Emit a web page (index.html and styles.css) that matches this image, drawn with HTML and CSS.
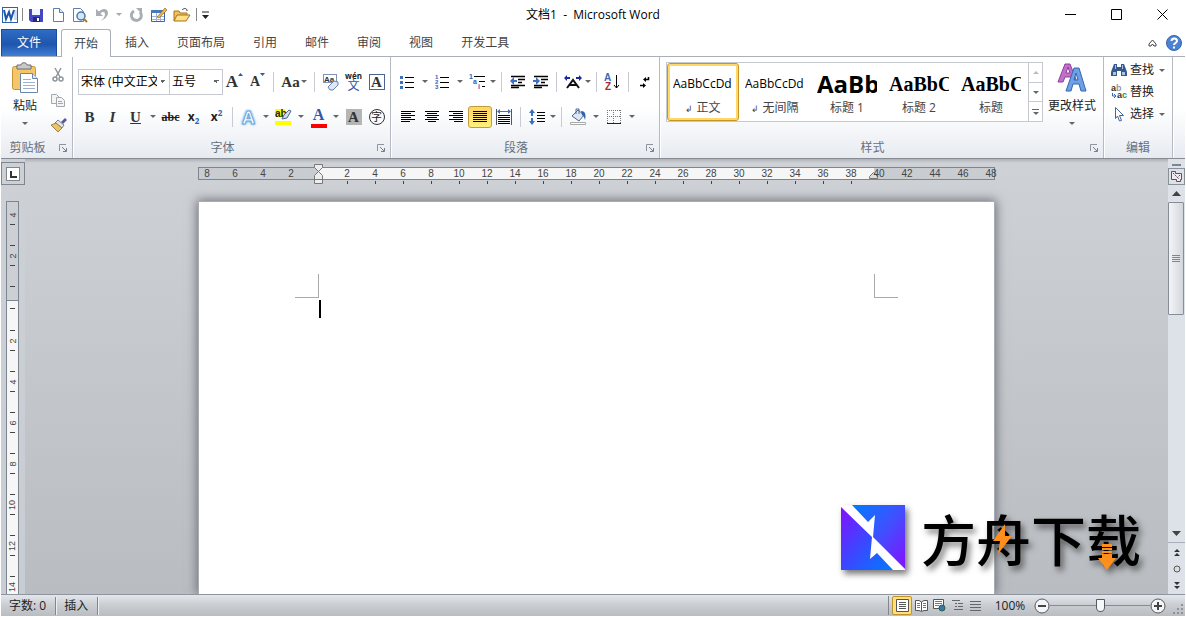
FILE: index.html
```html
<!DOCTYPE html>
<html lang="zh-CN">
  <head>
    <meta charset="utf-8" />
    <title>文档1 - Microsoft Word</title>
    <link rel="stylesheet" href="styles.css">
  </head>
  <body>
    <header class="titlebar">
      <div class="quick">
        <svg class="app" width="18" height="18" viewBox="0 0 18 18"><rect x="1.500" y="1.500" width="15" height="15" fill="#fff" stroke="#2b62ad"/><path d="M13 4h3v10h-3z" fill="#cfe0f5"/><path d="M3 4l2 9 3-7 2 7 3-9" fill="none" stroke="#1d56a8" stroke-width="2"/></svg>
        <i class="bar"></i>
        <button aria-label="保存"><svg width="16" height="16"><path d="M1 2h14v13H3l-2-2z" fill="#4546c4"/><path d="M4 2h8v6H4z" fill="#f0f4ff"/><path d="M5 10h7v5H5z" fill="#26267e"/><path d="M9 11h2v3H9z" fill="#fff"/></svg></button>
        <button aria-label="新建"><svg width="16" height="16"><path d="M3.500 1.500h6l4 4v9h-10z" fill="#fff" stroke="#5f7fa8"/><path d="M9.500 1.500v4h4" fill="#dbe6f3" stroke="#5f7fa8"/></svg></button>
        <button aria-label="打印预览"><svg width="16" height="16"><path d="M1.500 1.500h7l3 3v10h-10z" fill="#fff" stroke="#5f7fa8"/><circle cx="9" cy="9" r="4" fill="#cfe8fa" stroke="#4b76aa" stroke-width="1.500"/><path d="M12 12l3 3" stroke="#a9782c" stroke-width="2"/></svg></button>
        <button aria-label="撤消"><svg width="14" height="16"><path d="M1 2v7h7L5.500 6.500C8 4 10 5 10 7c0 3-2 5-4 7 4-2 7-5 7-8 0-5-6-5-9-1.500z" fill="#a9adb4"/></svg></button>
        <button class="drop" aria-label="撤消选项"><i class="tri light"></i></button>
        <button aria-label="恢复"><svg width="16" height="16"><path d="M6 4a5 5 0 1 0 6 1" fill="none" stroke="#a9adb4" stroke-width="3"/><path d="M8 1h6v6z" fill="#a9adb4"/></svg></button>
        <button class="wide" aria-label="绘制表格"><svg width="18" height="16"><path d="M1.500 3.500h13v11h-13z" fill="#fff" stroke="#3d65a5"/><path d="M1 3h14v3H1z" fill="#4a78bd"/><path d="M2 9.500h12M2 12.500h12M6.500 6v8M10.500 6v8" stroke="#9bb4d8"/><path d="M7 10l8-9 2 2-8 8z" fill="#f0b64a" stroke="#8a5a1e" stroke-width=".6"/></svg></button>
        <button class="wide" aria-label="打开"><svg width="18" height="16"><path d="M1 14V4h5l1 2h7v3" fill="#f2c25a" stroke="#a4731d"/><path d="M1 14l3-6h13l-4 6z" fill="#ffdf87" stroke="#a4731d"/><path d="M9 3c2-2 4-2 5 0v1" fill="none" stroke="#333"/></svg></button>
        <i class="bar"></i>
        <button class="drop" aria-label="自定义快速访问工具栏"><svg width="7" height="8"><path d="M0 1h7" stroke="#222"/><path d="M0 4h7L3.500 8z" fill="#222"/></svg></button>
      </div>
      <h1>文档1&nbsp; -&nbsp; Microsoft Word</h1>
      <div class="window-buttons">
        <button aria-label="最小化"><svg width="11" height="11"><path d="M0 5.500h11" stroke="#000"/></svg></button>
        <button aria-label="最大化"><svg width="11" height="11"><path d="M.5.500h10v10H.5z" fill="none" stroke="#000"/></svg></button>
        <button aria-label="关闭"><svg width="11" height="11"><path d="M.5.500l10 10M10.500.500l-10 10" stroke="#000"/></svg></button>
      </div>
    </header>

    <nav class="tabs">
      <button class="file">文件</button>
      <button class="active">开始</button>
      <button>插入</button>
      <button>页面布局</button>
      <button>引用</button>
      <button>邮件</button>
      <button>审阅</button>
      <button>视图</button>
      <button>开发工具</button>
      <div class="tabs-end">
        <button aria-label="功能区最小化"><svg width="9" height="8"><path d="M1 5l3.500-4L8 5v2H6L4.500 5 3 7H1z" fill="#fff" stroke="#444"/></svg></button>
        <button aria-label="帮助"><svg width="16" height="16"><circle cx="8" cy="8" r="7.500" fill="#4b82d3" stroke="#3465ad"/><path d="M5.500 6c0-3.500 5.500-3.500 5.500 0 0 2-3 2-3 4M8 11.500v2" fill="none" stroke="#fff" stroke-width="2"/></svg></button>
      </div>
    </nav>

    <div class="ribbon">
      <section class="group clipboard">
        <div class="columns">
          <button class="big">
            <svg width="28" height="32"><rect x="1.500" y="4.500" width="23" height="23" rx="2" fill="#f3c66b" stroke="#c79435"/><path d="M6 7V3h4c0-3 6-3 6 0h4v4z" fill="#c9c9c9" stroke="#6d6d6d"/><path d="M9.500 11.500h12l5 5v14h-17z" fill="#fff" stroke="#6b86ae"/><path d="M21.500 11.500v5h5" fill="#dde7f4" stroke="#6b86ae"/><path d="M12 17.500h8M12 20.500h12M12 23.500h12M12 26.500h12" stroke="#9db0cf"/></svg>
            <span>粘贴</span>
            <i class="tri"></i>
          </button>
          <div class="stack">
            <button aria-label="剪切"><svg width="14" height="16"><path d="M4 1l5 9M10 1l-5 9" stroke="#8f959d" stroke-width="1.500"/><circle cx="4" cy="12" r="2" fill="none" stroke="#8f959d" stroke-width="1.500"/><circle cx="10" cy="12" r="2" fill="none" stroke="#8f959d" stroke-width="1.500"/></svg></button>
            <button aria-label="复制"><svg width="16" height="14"><path d="M1.500 1.500h5l3 3v6h-8z" fill="#f4f4f4" stroke="#a4a8ae"/><path d="M6.500 4.500h5l3 3v6h-8z" fill="#f4f4f4" stroke="#a4a8ae"/><path d="M8 8.500h4M8 10.500h5" stroke="#a4a8ae"/></svg></button>
            <button aria-label="格式刷"><svg width="17" height="16"><path d="M11 5l4-4 2 2-4 4z" fill="#555a9a"/><path d="M8 3l6 5-2 3-7-5z" fill="#dfe3ea" stroke="#666" stroke-width=".8"/><path d="M1 8l5-2 6 5-4 4z" fill="#e9c569" stroke="#8d6b23" stroke-width=".8"/></svg></button>
          </div>
        </div>
        <footer><h2>剪贴板</h2><button aria-label="剪贴板选项"><svg width="8" height="8"><path d="M.5 7V.5H7" fill="none" stroke="#8d949e"/><path d="M3 3l4 4M7.500 4v3.500H4" fill="none" stroke="#777e88"/></svg></button></footer>
      </section>

      <section class="group font">
        <div class="row">
          <select class="font-name" aria-label="字体"><option>宋体 (中文正文)</option></select>
          <select class="font-size" aria-label="字号"><option>五号</option></select>
          <button class="serif grow" aria-label="增大字体">A<svg width="5" height="3"><path d="M0 3h5L2.500 0z" fill="#2f58a8"/></svg></button>
          <button class="serif shrink" aria-label="缩小字体">A<svg width="5" height="3"><path d="M0 0h5L2.500 3z" fill="#2f58a8"/></svg></button>
          <i class="sep"></i>
          <button class="serif case" aria-label="更改大小写">Aa<i class="tri"></i></button>
          <i class="sep"></i>
          <button aria-label="清除格式"><svg width="18" height="18"><rect x="1.500" y="1.500" width="13" height="8" fill="#fff" stroke="#7f94b5"/><text x="2" y="9" font-size="8" font-family="Liberation Sans" font-weight="bold" fill="#333">Aa</text><path d="M6 14l6-6 4 1v3l-5 5H8z" fill="#dce8f6" stroke="#6683ad"/></svg></button>
          <button class="pinyin" aria-label="拼音指南"><small>wén</small><b>文</b></button>
          <button class="serif" aria-label="字符边框"><span class="boxed">A</span></button>
        </div>
        <div class="row">
          <button class="serif" aria-label="加粗">B</button>
          <button class="serif" aria-label="倾斜"><em>I</em></button>
          <button class="serif" aria-label="下划线"><u>U</u></button>
          <button class="drop" aria-label="下划线选项"><i class="tri"></i></button>
          <button class="strike" aria-label="删除线"><s>abc</s></button>
          <button class="script" aria-label="下标">x<sub>2</sub></button>
          <button class="script" aria-label="上标">x<sup>2</sup></button>
          <i class="sep"></i>
          <button class="effect" aria-label="文本效果">A</button>
          <button class="drop" aria-label="文本效果选项"><i class="tri"></i></button>
          <button aria-label="突出显示"><svg width="17" height="18"><path d="M0 1h10v8H0z" fill="#ff0"/><text x="0" y="9" font-size="10" font-family="Liberation Sans" font-weight="bold" fill="#222">ab</text><path d="M7 11l2-4 5-5 2 1-4 7z" fill="#cfdcf0" stroke="#51678c"/><path d="M0 13h16v4H0z" fill="#ff0"/></svg></button>
          <button class="drop" aria-label="突出显示颜色"><i class="tri"></i></button>
          <button class="color" aria-label="字体颜色">A</button>
          <button class="drop" aria-label="字体颜色选项"><i class="tri"></i></button>
          <button class="serif" aria-label="字符底纹"><span class="shaded">A</span></button>
          <button aria-label="带圈字符"><span class="circled">字</span></button>
        </div>
        <footer><h2>字体</h2><button aria-label="字体选项"><svg width="8" height="8"><path d="M.5 7V.5H7" fill="none" stroke="#8d949e"/><path d="M3 3l4 4M7.500 4v3.500H4" fill="none" stroke="#777e88"/></svg></button></footer>
      </section>

      <section class="group paragraph">
        <div class="row">
          <button aria-label="项目符号"><svg width="15" height="14"><path d="M0 1h3v3H0zM0 6h3v3H0zM0 11h3v3H0z" fill="#3f6fbd"/><path d="M5 2.500h9M5 7.500h9M5 12.500h9" stroke="#000"/></svg></button>
          <button class="drop" aria-label="项目符号库"><i class="tri"></i></button>
          <button aria-label="编号"><svg width="15" height="16"><g font-size="6" font-family="Liberation Sans" font-weight="bold" fill="#2f62b5"><text x="0" y="5">1</text><text x="0" y="10">2</text><text x="0" y="15">3</text></g><path d="M5 3.500h9M5 8.500h9M5 13.500h9" stroke="#000"/></svg></button>
          <button class="drop" aria-label="编号库"><i class="tri"></i></button>
          <button aria-label="多级列表"><svg width="18" height="17"><g font-size="7" font-family="Liberation Sans" font-weight="bold" fill="#2f62b5"><text x="0" y="6">1</text><text x="4" y="11">a</text><text x="9" y="16">i</text></g><path d="M5 3.500h11M10 8.500h6M13 13.500h3" stroke="#000"/></svg></button>
          <button class="drop tight" aria-label="列表库"><i class="tri"></i></button>
          <i class="sep"></i>
          <button aria-label="减少缩进量"><svg width="16" height="14"><path d="M1 1.500h14M8 4.500h7M8 7.500h4M1 10.500h14M1 12.500h8" stroke="#000" stroke-width="1.500"/><path d="M0 6l4-4v3h3v2H4v3z" fill="#3b6fc4"/></svg></button>
          <button aria-label="增加缩进量"><svg width="16" height="14"><path d="M1 1.500h14M8 4.500h7M8 7.500h4M1 10.500h14M1 12.500h8" stroke="#000" stroke-width="1.500"/><path d="M7 6L3 2v3H0v2h3v3z" fill="#3b6fc4"/></svg></button>
          <i class="sep"></i>
          <button aria-label="中文版式"><svg width="18" height="14"><path d="M0 3l3-3v2h3v2H3v2zM18 3l-3-3v2h-3v2h3v2z" fill="#1a2a9c"/><path d="M3 13l6-8 6 8M5 10h8" fill="none" stroke="#111" stroke-width="2"/></svg></button>
          <button class="drop tight" aria-label="中文版式选项"><i class="tri"></i></button>
          <i class="sep"></i>
          <button aria-label="排序"><svg width="17" height="18"><text x="0" y="8" font-size="10" font-family="Liberation Sans" font-weight="bold" fill="#3f67b0">A</text><text x="1" y="17" font-size="10" font-family="Liberation Sans" font-weight="bold" fill="#9d3039">Z</text><path d="M12.500 2v13M10 12l2.500 3 2.500-3" fill="none" stroke="#000"/></svg></button>
          <i class="sep"></i>
          <button aria-label="显示编辑标记"><svg width="12" height="14"><path d="M9.500 2v2.500H6M1 10.500h4" fill="none" stroke="#000" stroke-width="1.500"/><path d="M7 2v5L4 4.500zM4 8v5l3-2.500z"/></svg></button>
        </div>
        <div class="row align">
          <button aria-label="左对齐"><svg width="14" height="12"><path d="M0 .5h14M0 2.500h10M0 4.500h14M0 6.500h10M0 8.500h14M0 10.500h9" stroke="#000"/></svg></button>
          <button aria-label="居中"><svg width="14" height="12"><path d="M0 .5h14M2 2.500h10M0 4.500h14M2 6.500h10M0 8.500h14M3 10.500h8" stroke="#000"/></svg></button>
          <button aria-label="右对齐"><svg width="14" height="12"><path d="M0 .5h14M4 2.500h10M0 4.500h14M4 6.500h10M0 8.500h14M5 10.500h9" stroke="#000"/></svg></button>
          <button class="on" aria-label="两端对齐"><svg width="14" height="12"><path d="M0 .5h14M0 2.500h14M0 4.500h14M0 6.500h14M0 8.500h14M0 10.500h14" stroke="#000"/></svg></button>
          <button aria-label="分散对齐"><svg width="16" height="16"><path d="M.5 0v16M15.500 0v16" stroke="#555"/><path d="M2 6.500h12M2 8.500h12M2 10.500h12M2 12.500h12M2 14.500h12" stroke="#000"/><path d="M1 2.500L4 0v2h8V0l3 2.500L12 5V3H4v2z" fill="#3b6fc4"/></svg></button>
          <i class="sep"></i>
          <button aria-label="行距"><svg width="16" height="16"><path d="M3 0l3 4H4v3H2V4H0zM3 16l3-4H4V9H2v3H0z" fill="#3b6fc4"/><path d="M8 3.500h8M8 6.500h8M8 9.500h8M8 12.500h8" stroke="#000"/></svg></button>
          <button class="drop tight" aria-label="行距选项"><i class="tri"></i></button>
          <i class="sep"></i>
          <button aria-label="底纹"><svg width="18" height="18"><path d="M3 8l6-6 6 5-5 6z" fill="#dce8f6" stroke="#50698f"/><path d="M7 6V1h3v5" fill="none" stroke="#50698f"/><path d="M12 3c5 0 5 5 4 9-1-4-2-4-3-5z" fill="#3162ad"/><path d="M1.500 14.500h15v2h-15z" fill="#fff" stroke="#aaa"/></svg></button>
          <button class="drop" aria-label="底纹颜色"><i class="tri"></i></button>
          <button aria-label="边框"><svg width="14" height="14"><path d="M0 .5h14M.5 0v13M13.500 0v13M6.500 0v13M0 6.500h13" fill="none" stroke="#777" stroke-dasharray="1 1"/><path d="M0 13.500h14" stroke="#222"/></svg></button>
          <button class="drop" aria-label="边框选项"><i class="tri"></i></button>
        </div>
        <footer><h2>段落</h2><button aria-label="段落选项"><svg width="8" height="8"><path d="M.5 7V.5H7" fill="none" stroke="#8d949e"/><path d="M3 3l4 4M7.500 4v3.500H4" fill="none" stroke="#777e88"/></svg></button></footer>
      </section>

      <section class="group styles">
        <div class="columns">
          <div class="gallery">
            <button class="on"><span class="sample">AaBbCcDd</span><span><small>↲</small> 正文</span></button>
            <button><span class="sample">AaBbCcDd</span><span><small>↲</small> 无间隔</span></button>
            <button><span class="sample h-one">AaBb</span><span>标题 1</span></button>
            <button><span class="sample h-two">AaBbC</span><span>标题 2</span></button>
            <button><span class="sample h-two">AaBbC</span><span>标题</span></button>
            <div class="gallery-scroll">
              <button aria-label="上一行"><i class="tri up light"></i></button>
              <button aria-label="下一行"><i class="tri"></i></button>
              <button class="more" aria-label="其他"><i class="tri"></i></button>
            </div>
          </div>
          <button class="big change">
            <svg width="30" height="32"><path d="M1 20L8 2h5l7 18h-4l-2-5H8l-2 5zM9 11h4l-2-6z" fill="#c070c9" stroke="#8e3f9c"/><path d="M9 29l8-23h5l7 23h-5l-2-7h-6l-2 7zM17 18h4l-2-7z" fill="#6ea0e6" stroke="#3466b4"/></svg>
            <span>更改样式</span>
            <i class="tri"></i>
          </button>
        </div>
        <footer><h2>样式</h2><button aria-label="样式选项"><svg width="8" height="8"><path d="M.5 7V.5H7" fill="none" stroke="#8d949e"/><path d="M3 3l4 4M7.500 4v3.500H4" fill="none" stroke="#777e88"/></svg></button></footer>
      </section>

      <section class="group editing">
        <button><svg width="16" height="14"><path d="M3 1h3v3h4V1h3l3 8v4h-6V8H6v5H0V9z" fill="#35588f"/><path d="M2 9h3v3H2zM11 9h3v3h-3zM4 2h1v4H4zM11 2h1v4h-1z" fill="#a9c2e6"/></svg>查找<i class="tri"></i></button>
        <button><svg width="16" height="16"><g font-size="9" font-family="Liberation Sans" font-weight="bold"><text x="0" y="7" fill="#333">a<tspan fill="#999">b</tspan></text><text x="6" y="14" fill="#333">a<tspan fill="#2c9440">c</tspan></text></g><path d="M1.500 9v3h3M3 10l2 2-2 2" fill="none" stroke="#3465b5"/></svg>替换</button>
        <button><svg width="16" height="16"><path d="M4.500 1.500l8 8h-4l2 5-2 .5-2-5-2 2.500z" fill="#fff" stroke="#44679b"/></svg>选择<i class="tri"></i></button>
        <footer><h2>编辑</h2></footer>
      </section>
    </div>

    <main class="workspace">
      <aside class="left-strip">
        <button class="tab-stop" aria-label="制表符"><span><svg width="7" height="7"><path d="M1 0v6H7" fill="none" stroke="#333" stroke-width="2"/></svg></span></button>
        <div class="v-ruler">
          <ol class="v-margin"><li><span>4</span></li><li><span>2</span></li><li></li></ol>
          <ol class="v-body"><li><span>2</span></li><li><span>4</span></li><li><span>6</span></li><li><span>8</span></li><li><span>10</span></li><li><span>12</span></li><li><span>14</span></li></ol>
        </div>
      </aside>

      <div class="desk">
        <div class="h-ruler">
          <svg class="indent" width="9" height="21"><path d="M.5.500h8v3l-4 4 4 4v8h-8v-8l4-4-4-4z" fill="#eee" stroke="#777"/><path d="M.5 15.500h8" stroke="#777"/></svg>
          <svg class="indent-right" width="9" height="7"><path d="M.5 6.500v-2l4-4 4 4v2z" fill="#ddd" stroke="#777"/></svg>
          <ol>
            <li>8</li><li>6</li><li>4</li><li>2</li><li></li>
            <li class="tick">2</li><li class="tick">4</li><li class="tick">6</li><li class="tick">8</li><li class="tick">10</li><li class="tick">12</li><li class="tick">14</li><li class="tick">16</li><li class="tick">18</li><li class="tick">20</li><li class="tick">22</li><li class="tick">24</li><li class="tick">26</li><li class="tick">28</li><li class="tick">30</li><li class="tick">32</li><li class="tick">34</li><li class="tick">36</li><li class="tick">38</li>
            <li>40</li><li>42</li><li>44</li><li>46</li><li>48</li>
          </ol>
        </div>
        <article class="page">
          <div class="corners"><i></i><i></i></div>
          <div class="caret"></div>
        </article>
      </div>

      <aside class="scrollbar">
        <i class="split"></i>
        <button class="ruler-toggle" aria-label="标尺"><svg width="13" height="13"><path d="M1.500 1.500h4v2h6v6h-1v2h-4v-2h-5z" fill="#f2e9f2" stroke="#555"/><path d="M3 3l6 6M10 5l-3 3" stroke="#555" stroke-dasharray="2 1"/></svg></button>
        <button aria-label="向上滚动"><svg width="9" height="5"><path d="M0 5h9L4.500 0z" fill="#444"/></svg></button>
        <div class="track"><div class="thumb"><svg width="8" height="8"><path d="M0 .5h8M0 2.500h8M0 4.500h8M0 6.500h8" stroke="#80868e"/></svg></div></div>
        <button aria-label="向下滚动"><svg width="9" height="5"><path d="M0 0h9L4.500 5z" fill="#444"/></svg></button>
        <div class="browse">
          <button aria-label="前一页"><svg width="6" height="8"><path d="M0 4h6L3 1zM0 8h6L3 5z" fill="#333"/></svg></button>
          <button aria-label="选择浏览对象"><svg width="8" height="8"><circle cx="4" cy="4" r="3" fill="#ddd" stroke="#555"/></svg></button>
          <button aria-label="下一页"><svg width="6" height="8"><path d="M0 0h6L3 3zM0 4h6L3 7z" fill="#333"/></svg></button>
        </div>
      </aside>

      <div class="brand">
        <svg width="64" height="65" viewBox="0 0 64 65"><defs><linearGradient id="upper" x1="0" y1="0" x2="1" y2="1"><stop offset="0" stop-color="#007bff"/><stop offset=".5" stop-color="#4050ff"/><stop offset="1" stop-color="#8410ff"/></linearGradient><linearGradient id="lower" x1="0" y1="0" x2="1" y2="1"><stop offset="0" stop-color="#8410ff"/><stop offset=".5" stop-color="#3a48ff"/><stop offset="1" stop-color="#007bff"/></linearGradient></defs><path d="M0 0h64v65H0z" fill="#fff"/><path d="M11 0h53v64L32 32l2-22-7 7z" fill="url(#upper)"/><path d="M0 2l31 30-2 22 7-6 16 17H0z" fill="url(#lower)"/></svg>
        <strong>方舟下载</strong>
        <svg class="bolt" width="20" height="30"><path d="M12 0L0 17h7L5 30l14-18h-7z" fill="#ff8f1c"/></svg>
        <svg class="arrow" width="18" height="26"><path d="M4 0h10v3H4zM4 4h10v2H4zM4 7h10v2H4zM4 10h10v4h4L9 26 0 14h4z" fill="#ff8f1c"/></svg>
      </div>
    </main>

    <footer class="status">
      <button>字数: 0</button>
      <button>插入</button>
      <div class="views">
        <button class="on" aria-label="页面视图"><svg width="13" height="13"><path d="M.5.500h12v12H.5z" fill="#fff" stroke="#555"/><path d="M3 3.500h7M3 5.500h7M3 7.500h7M3 9.500h7" stroke="#555"/></svg></button>
        <button aria-label="阅读版式"><svg width="13" height="12"><path d="M6.500 2L4 .5H.5v10H4l2.500 1 2.500-1h3.500V.5H9zM6.500 2v9" fill="#fff" stroke="#555"/><path d="M2 3.500h3M2 5.500h3M2 7.500h3M8 3.500h3M8 5.500h3M8 7.500h3" stroke="#777"/></svg></button>
        <button aria-label="Web 版式"><svg width="13" height="13"><path d="M.5.500h10v9H.5z" fill="#fff" stroke="#555"/><path d="M2 2.500h7M2 4.500h7M2 6.500h4" stroke="#777"/><circle cx="9" cy="9" r="3" fill="#3579a8" stroke="#2c6044"/></svg></button>
        <button aria-label="大纲视图"><svg width="11" height="11"><path d="M0 .5h8M3 3.500h2M6 3.500h5M3 6.500h2M6 6.500h5M2 9.500h9" stroke="#666"/></svg></button>
        <button aria-label="草稿"><svg width="11" height="10"><path d="M0 .5h11M0 3.500h11M0 6.500h11M0 9.500h11" stroke="#666"/></svg></button>
      </div>
      <div class="zoom">
        <button class="percent">100%</button>
        <button aria-label="缩小"><svg width="16" height="16"><circle cx="8" cy="8" r="7" fill="#f4f5f6" stroke="#555b62"/><path d="M4 8h8" stroke="#444" stroke-width="2"/></svg></button>
        <input type="range" min="0" max="100" value="50" aria-label="显示比例">
        <button aria-label="放大"><svg width="16" height="16"><circle cx="8" cy="8" r="7" fill="#f4f5f6" stroke="#555b62"/><path d="M4 8h8M8 4v8" stroke="#444" stroke-width="2"/></svg></button>
      </div>
      <svg class="grip" width="12" height="12"><path d="M8 0h2v2H8zM4 4h2v2H4zM8 4h2v2H8zM0 8h2v2H0zM4 8h2v2H4zM8 8h2v2H8z" fill="#8d9399"/></svg>
    </footer>
  </body>
</html>
```

FILE: styles.css
```css
* {
  box-sizing: border-box;
}
html {
  height: 100%;
  background: #fff;
}
body {
  display: flex;
  flex-direction: column;
  height: 100%;
  margin: 0;
  padding: 0 1px 1px;
  overflow: hidden;
  font: 12px/16px "Open Sans", "Noto Sans CJK SC", sans-serif;
  color: #222;
}
button {
  display: flex;
  align-items: center;
  justify-content: center;
  flex: none;
  margin: 0;
  padding: 0;
  border: 0;
  background: none;
  font: inherit;
  color: inherit;
}
svg {
  display: block;
  flex: none;
}
h1, h2 {
  margin: 0;
  font-size: 12px;
  font-weight: normal;
}
ol {
  margin: 0;
  padding: 0;
  list-style: none;
}

/* small drop-down arrow */
.tri {
  width: 0;
  height: 0;
  border: 3px solid transparent;
  border-top-color: #666;
  border-bottom: 0;
}
.tri.up {
  border-top: 0;
  border-bottom: 3px solid #666;
}
.tri.light {
  border-top-color: #aaa;
  border-bottom-color: #bbb;
}

/* title bar */
.titlebar {
  display: grid;
  grid-template-columns: 1fr auto 1fr;
  align-items: center;
  height: 29px;
  flex: none;
}
.quick {
  display: flex;
  align-items: center;
}
.quick button {
  width: 22px;
  height: 22px;
}
.quick .wide {
  width: 23px;
}
.quick .drop {
  width: 12px;
}
.bar {
  width: 1px;
  height: 13px;
  margin: 0 2px 0 3px;
  background: #888;
}
.titlebar h1 {
  color: #000;
}
.window-buttons {
  display: flex;
  justify-content: flex-end;
}
.window-buttons button {
  width: 46px;
  height: 29px;
}

/* tabs */
.tabs {
  display: flex;
  height: 28px;
  flex: none;
  border-bottom: 1px solid #abb0b8;
  color: #444;
}
.tabs > button {
  height: 27px;
  padding: 0 14px;
}
.tabs .file {
  margin-right: 4px;
  border: 1px solid #1c4d9c;
  border-bottom: 0;
  padding: 0 15px;
  background: linear-gradient(#2f6cc4, #1f56ae 55%, #3e7fd4);
  color: #fff;
}
.tabs .active {
  height: 28px;
  border: 1px solid #abb0b8;
  border-bottom: 0;
  border-radius: 3px 3px 0 0;
  padding: 0 12px;
  background: #fff;
}
.tabs-end {
  display: flex;
  align-items: center;
  gap: 9px;
  margin-left: auto;
  padding-right: 3px;
}

/* ribbon */
.ribbon {
  display: flex;
  height: 102px;
  flex: none;
  border-bottom: 1px solid #878c94;
  background: linear-gradient(#fff 50%, #f3f5f8 75%, #e7ebf0);
}
.group {
  display: flex;
  flex-direction: column;
  flex: none;
  border-right: 1px solid #b6bbc3;
  box-shadow: 1px 0 #fff;
}
.group > footer {
  display: flex;
  align-items: center;
  height: 20px;
  margin-top: auto;
  color: #66707f;
}
.group h2 {
  flex: 1;
  text-align: center;
}
.group > footer button {
  width: 18px;
}
.columns {
  display: flex;
  padding-top: 5px;
}
.row {
  display: flex;
  align-items: center;
  height: 35px;
  padding-left: 5px;
}
.row button {
  width: 23px;
  height: 22px;
}
.row .drop {
  width: 12px;
}
.row .tight {
  width: 8px;
}
.align button {
  width: 24px;
}
.sep {
  width: 1px;
  height: 20px;
  margin: 0 4px;
  background: #c8ccd2;
}
.big {
  flex-direction: column;
  justify-content: flex-start;
  gap: 4px;
  width: 48px;
  height: 68px;
}
.big .tri {
  margin-top: 4px;
}
.row .on {
  border: 1px solid #c29b3d;
  border-radius: 3px;
  background: linear-gradient(#ffd566, #fff07c);
}

.clipboard {
  width: 72px;
}
.stack button {
  width: 18px;
  height: 25px;
}

.font {
  width: 318px;
  padding-top: 7px;
}
select {
  height: 26px;
  appearance: none;
  border: 1px solid #c6cad0;
  border-radius: 0;
  padding: 0 12px 0 2px;
  background:
    linear-gradient(to bottom left, #666 50%, transparent 50%) right 7px center / 3px 3px no-repeat,
    linear-gradient(to bottom right, #666 50%, transparent 50%) right 4px center / 3px 3px no-repeat,
    #fff;
  background-origin: border-box;
  font: inherit;
  color: #000;
}
.font-name {
  width: 92px;
}
.font-size {
  width: 54px;
  margin-left: -1px;
}
.serif {
  font-family: "Liberation Serif", serif;
  font-size: 15px;
  font-weight: bold;
  color: #333;
}
.grow {
  font-size: 17px;
}
.shrink {
  font-size: 14px;
}
.grow svg, .shrink svg {
  align-self: flex-start;
  margin-top: 2px;
}
.row .case {
  gap: 1px;
  width: 32px;
}
.row .pinyin {
  flex-direction: column;
}
.pinyin small {
  font-size: 8px;
  line-height: 8px;
  font-weight: bold;
}
.pinyin b {
  font-size: 12px;
  line-height: 12px;
  font-weight: normal;
  color: #2a52a3;
}
.boxed, .shaded {
  width: 16px;
  height: 16px;
  border: 1px solid #4d658a;
  line-height: 14px;
}
.shaded {
  border-color: #b5b5b5;
  background: #b5b5b5;
}
.circled {
  width: 16px;
  height: 16px;
  border: 1px solid #333;
  border-radius: 50%;
  font-size: 11px;
  line-height: 13px;
}
.strike {
  font-family: "Liberation Serif", serif;
  font-size: 12px;
  font-weight: bold;
}
.script {
  font-weight: bold;
}
.script sub, .script sup {
  font-size: 8px;
  line-height: 8px;
  color: #2f62b5;
}
.script sub {
  margin-top: 8px;
}
.script sup {
  margin-bottom: 8px;
}
.effect {
  font-size: 18px;
  font-weight: bold;
  color: #fff;
  -webkit-text-stroke: 1px #6fa5dc;
  text-shadow: 0 0 3px #5ab0ee, 0 0 3px #5ab0ee;
}
.color {
  border-bottom: 4px solid transparent;
  background: linear-gradient(#f00, #f00) center bottom / 16px 4px no-repeat border-box;
  font-family: "Liberation Serif", serif;
  font-size: 16px;
  font-weight: bold;
  color: #2f58a8;
}

.paragraph {
  width: 269px;
  padding-top: 7px;
}

.styles {
  width: 444px;
}
.styles .columns {
  padding-left: 6px;
}
.gallery {
  display: flex;
  height: 60px;
  border: 1px solid #c6cad0;
  background: #fff;
}
.gallery > button {
  display: block;
  width: 72px;
  padding: 0 6px;
}
.gallery > .on {
  border: 1px solid #c8942a;
  border-radius: 3px;
  padding: 0 5px;
  box-shadow: inset 0 0 0 2px #ffd967;
}
.gallery > button > span {
  display: block;
  color: #444;
}
.gallery small {
  font-size: 9px;
}
.gallery .sample {
  height: 32px;
  overflow: hidden;
  font-size: 12px;
  line-height: 32px;
  text-align: left;
  color: #000;
}
.gallery .h-one {
  font-size: 24px;
  font-weight: bold;
}
.gallery .h-two {
  font-family: "Liberation Serif", serif;
  font-size: 20px;
  font-weight: bold;
}
.gallery-scroll {
  display: flex;
  flex-direction: column;
  width: 14px;
  margin-left: 1px;
  border-left: 1px solid #c6cad0;
}
.gallery-scroll button {
  flex: 1;
  width: 100%;
}
.gallery-scroll button + button {
  border-top: 1px solid #c6cad0;
}
.gallery-scroll .more {
  flex-direction: column;
  gap: 2px;
}
.more::before {
  content: "";
  width: 7px;
  height: 1px;
  background: #666;
}
.change {
  width: 58px;
}

.editing {
  width: 69px;
  padding-top: 2px;
}
.editing > button {
  justify-content: flex-start;
  gap: 3px;
  height: 22px;
  padding-left: 7px;
}
.editing .tri {
  margin-left: 2px;
}

/* workspace */
.workspace {
  position: relative;
  display: flex;
  flex: 1;
  min-height: 0;
  overflow: hidden;
  background: linear-gradient(#aeb2b8, #ced1d5 4px, #b9bcc1);
}
.left-strip {
  display: flex;
  flex-direction: column;
  width: 24px;
  flex: none;
  padding-top: 3px;
  background: linear-gradient(#cdd1d6, #c8cdd3);
}
.tab-stop {
  width: 24px;
  height: 23px;
  border: 1px solid #7f868e;
}
.tab-stop span {
  display: flex;
  align-items: flex-end;
  justify-content: center;
  width: 14px;
  height: 14px;
  border: 1px solid #7f868e;
  padding-bottom: 2px;
  background: #fff;
}
.v-ruler {
  width: 13px;
  margin: 16px 0 0 5px;
  border: 1px solid #7d8590;
  border-bottom: 0;
  background: #f6f6f6;
  color: #444;
}
.v-ruler li {
  display: flex;
  flex-direction: column;
  align-items: center;
  justify-content: space-between;
  height: 41px;
  padding: 10px 0;
}
.v-ruler li::before, .v-ruler li::after, .v-body::before {
  content: "";
  width: 5px;
  height: 1px;
  background: #444;
}
.v-ruler span {
  transform: rotate(-90deg);
  font: 9px/10px "Liberation Sans", sans-serif;
}
.v-margin {
  display: flex;
  flex-direction: column;
  justify-content: flex-end;
  height: 99px;
  overflow: hidden;
  border-bottom: 1px solid #7d8590;
  background: #ccd0d5;
}
.v-margin li {
  flex: none;
}
.v-margin li:first-child::before {
  background: none;
}
.v-margin li:last-child {
  height: 24px;
}
.v-margin li:last-child::before {
  display: none;
}
.v-body::before {
  display: block;
  margin: 7px auto 11px;
}

.desk {
  display: flex;
  flex-direction: column;
  align-items: center;
  flex: 1;
  padding-top: 8px;
}
.h-ruler {
  position: relative;
  width: 797px;
  height: 13px;
  flex: none;
  border: 1px solid #7d8590;
  background: linear-gradient(to right, #c9cdd2 120px, #f6f6f6 120px, #f6f6f6 675px, #c9cdd2 675px);
}
.h-ruler ol {
  display: flex;
  margin-left: -6px;
}
.h-ruler li {
  position: relative;
  width: 28px;
  flex: none;
  font: 10px/11px "Liberation Sans", sans-serif;
  text-align: center;
  color: #444;
}
.tick::after {
  content: "";
  position: absolute;
  top: 13px;
  left: 14px;
  width: 1px;
  height: 3px;
  background: #444;
}
.indent {
  position: absolute;
  top: -4px;
  left: 115px;
}
.indent-right {
  position: absolute;
  top: 4px;
  left: 670px;
}
.page {
  width: 797px;
  flex: 1;
  margin-top: 21px;
  border: 1px solid #a9adb3;
  border-bottom: 0;
  padding: 72px 96px 0;
  background: #fff;
  box-shadow: 0 0 10px 1px #6b6f75;
}
.corners {
  display: flex;
  justify-content: space-between;
}
.corners i {
  width: 24px;
  height: 24px;
  border-bottom: 1px solid #aaa;
  border-right: 1px solid #aaa;
}
.corners i + i {
  border-right: 0;
  border-left: 1px solid #aaa;
}
.caret {
  width: 2px;
  height: 18px;
  margin: 2px 0 0 24px;
  background: #000;
}

.scrollbar {
  display: flex;
  flex-direction: column;
  align-items: center;
  width: 17px;
  flex: none;
  padding-top: 5px;
  background: #dde2e9;
}
.split {
  width: 9px;
  height: 2px;
  background: #7d8590;
}
.ruler-toggle {
  width: 17px;
  height: 17px;
  margin: 2px 0 0;
  border: 1px solid #8a9099;
}
.scrollbar > button {
  height: 17px;
}
.track {
  flex: 1;
  width: 100%;
}
.thumb {
  display: flex;
  align-items: center;
  justify-content: center;
  width: 16px;
  height: 113px;
  border: 1px solid #868d98;
  border-radius: 1px;
  background: linear-gradient(to right, #f3f4f6, #d3d7dc);
}
.browse {
  width: 100%;
  border-top: 1px solid #a9b0ba;
}
.browse button {
  width: 100%;
  height: 17px;
}

.brand {
  position: absolute;
  right: 44px;
  bottom: 22px;
  display: flex;
  align-items: center;
  gap: 16px;
  filter: drop-shadow(3px 4px 3px #0008);
}
.brand strong {
  font: 500 55px/70px "Noto Sans CJK SC", sans-serif;
  color: #000;
}
.bolt {
  position: absolute;
  top: 22px;
  left: 152px;
}
.arrow {
  position: absolute;
  top: 42px;
  right: 25px;
}

/* status bar */
.status {
  display: flex;
  align-items: center;
  height: 22px;
  flex: none;
  border-top: 1px solid #8e959e;
  background: linear-gradient(#e3e6ea, #c9cdd2 50%, #b9bdc2);
}
.status > button {
  height: 18px;
  border-right: 1px solid #82878d;
  padding: 0 9px 0 8px;
  box-shadow: 1px 0 #eceef0;
}
.views {
  display: flex;
  align-items: center;
  margin-left: auto;
  border-left: 1px solid #82878d;
  padding-left: 3px;
}
.views button {
  width: 18px;
  height: 19px;
}
.views .on {
  width: 20px;
  border: 1px solid #c2902c;
  border-radius: 2px;
  background: #ffe07a;
}
.zoom {
  display: flex;
  align-items: center;
  margin-left: 10px;
}
.percent {
  width: 32px;
  margin-right: 8px;
}
.zoom input {
  width: 100px;
  height: 16px;
  margin: 0;
  appearance: none;
  background: linear-gradient(#858c94, #858c94) center / 100% 1px no-repeat;
}
.zoom input::-webkit-slider-thumb {
  width: 9px;
  height: 13px;
  appearance: none;
  border: 1px solid #555b62;
  border-radius: 1px 1px 5px 5px;
  background: #f6f7f8;
}
.grip {
  align-self: flex-end;
  margin-left: 7px;
}
```
